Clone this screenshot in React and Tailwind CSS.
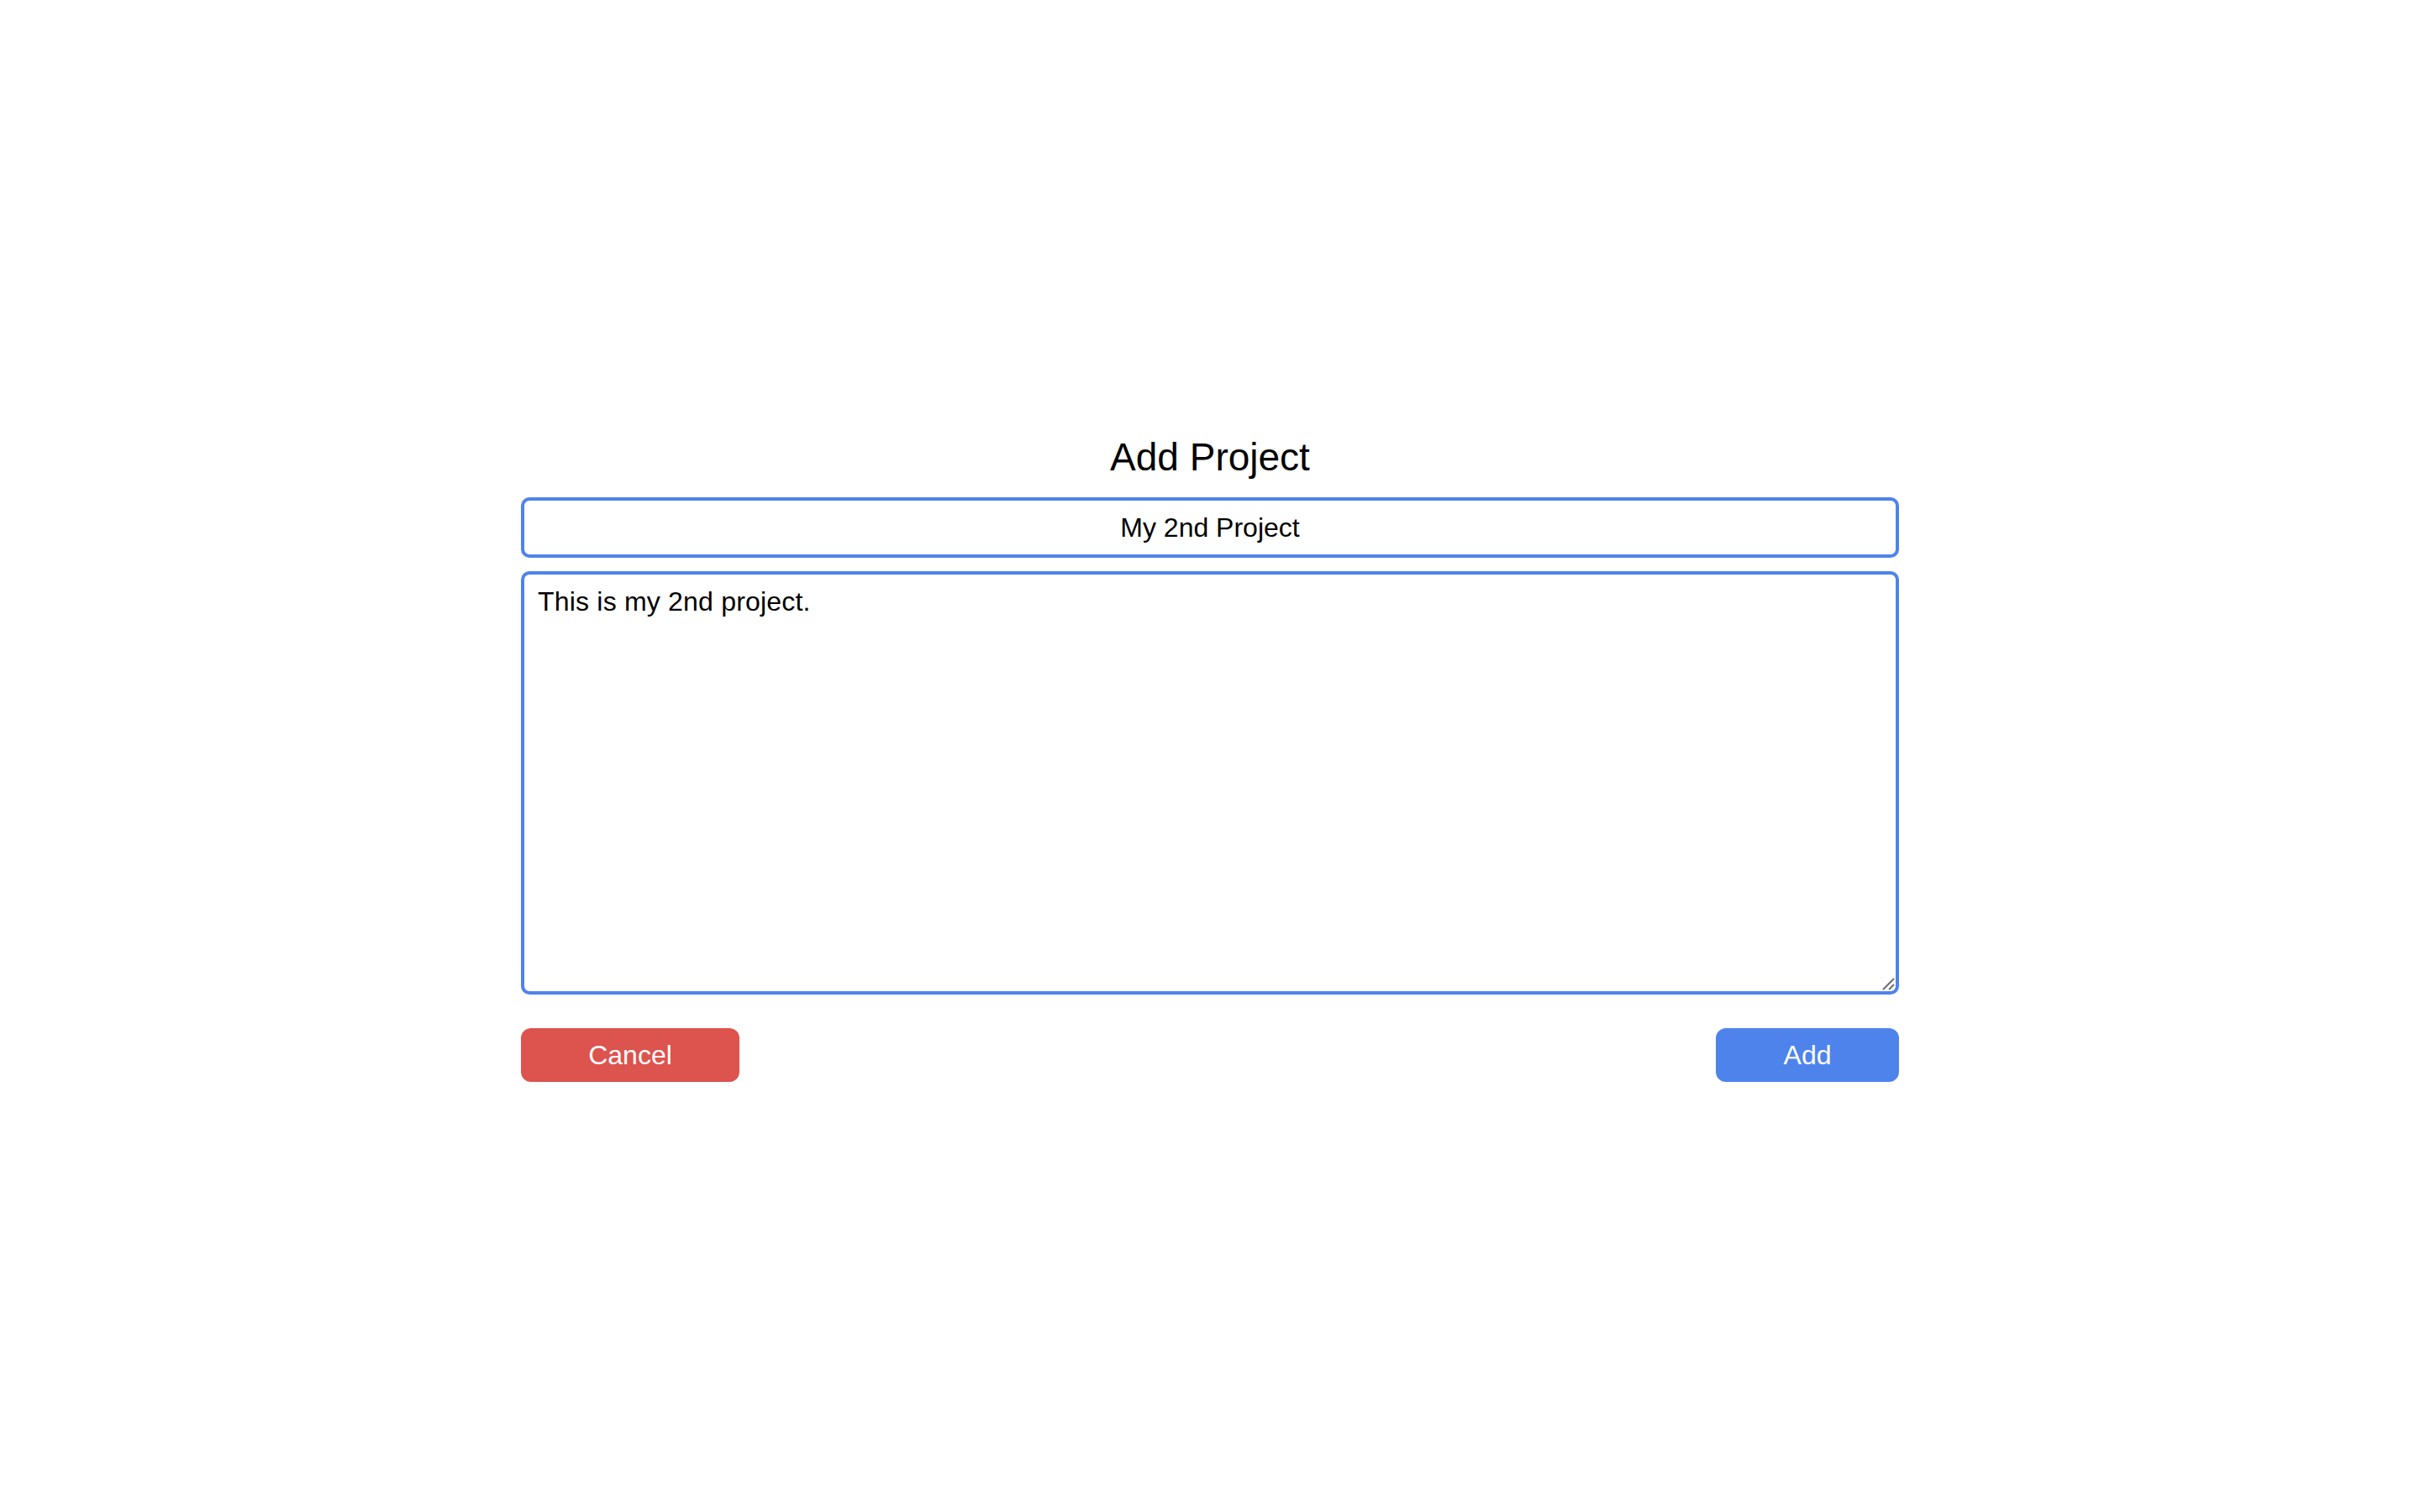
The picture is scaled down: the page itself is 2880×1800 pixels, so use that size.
import { useState } from 'react';

// ─── Component ────────────────────────────────────────────────────────────────

export default function App() {
  const [title, setTitle] = useState('My 2nd Project');
  const [description, setDescription] = useState('This is my 2nd project.');

  return (
    <div className="min-h-screen w-full bg-white pt-[518px] font-['Liberation_Sans',Arial,sans-serif] text-black">
      <div className="mx-auto flex w-[1640px] flex-col">
        {/* Heading */}
        <h1 className="text-center text-[46px] leading-[52px] font-normal">Add Project</h1>

        {/* Title field */}
        <input
          value={title}
          onChange={e => setTitle(e.target.value)}
          className="mt-[22px] h-[72px] w-full rounded-[10px] border-[4px] border-[#4f83ec] bg-white px-4 text-center text-[32px] leading-normal outline-none"
        />

        {/* Description field, with a 2x resize grip drawn over the corner */}
        <div className="relative mt-4">
          <textarea
            value={description}
            onChange={e => setDescription(e.target.value)}
            className="block h-[504px] w-full resize-none rounded-[10px] border-[4px] border-[#4f83ec] bg-white px-4 py-2 text-[32px] tracking-[0.2px] leading-[48px] outline-none"
          />
          <svg
            className="pointer-events-none absolute bottom-[4px] right-[4px]"
            width="18"
            height="18"
            viewBox="0 0 18 18"
          >
            <line x1="3" y1="16" x2="16" y2="3" stroke="#6b6b6b" strokeWidth="2" />
            <line x1="10" y1="16" x2="16" y2="10" stroke="#6b6b6b" strokeWidth="2" />
          </svg>
        </div>

        {/* Actions */}
        <div className="mt-10 flex items-center justify-between">
          <button className="h-16 w-[260px] rounded-[12px] bg-[#dd534e] text-[32px] text-white">
            Cancel
          </button>
          <button className="h-16 w-[218px] rounded-[12px] bg-[#4f83ec] text-[32px] text-white">
            Add
          </button>
        </div>
      </div>
    </div>
  );
}
